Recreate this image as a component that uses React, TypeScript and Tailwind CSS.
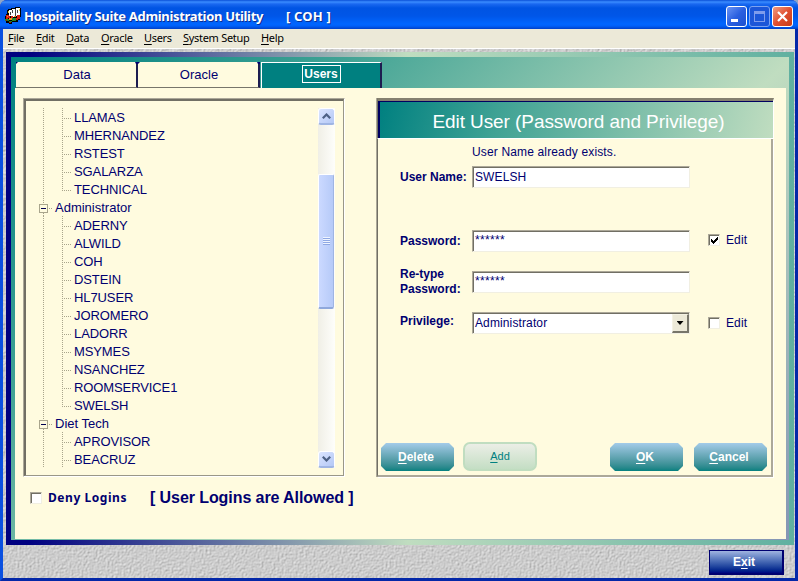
import React from "react";

const sans = "font-['Liberation_Sans',Arial,sans-serif]";
const ui = "font-['Noto_Sans','Open_Sans',sans-serif]";

const menus: [string, string][] = [
  ["File", "w-[28px]"],
  ["Edit", "w-[30px]"],
  ["Data", "w-[35px]"],
  ["Oracle", "w-[43px]"],
  ["Users", "w-[39px]"],
  ["System Setup", "w-[78px]"],
  ["Help", "w-[30px]"],
];

const tree: { name: string; group?: boolean; last?: boolean }[] = [
  { name: "LLAMAS" },
  { name: "MHERNANDEZ" },
  { name: "RSTEST" },
  { name: "SGALARZA" },
  { name: "TECHNICAL", last: true },
  { name: "Administrator", group: true },
  { name: "ADERNY" },
  { name: "ALWILD" },
  { name: "COH" },
  { name: "DSTEIN" },
  { name: "HL7USER" },
  { name: "JOROMERO" },
  { name: "LADORR" },
  { name: "MSYMES" },
  { name: "NSANCHEZ" },
  { name: "ROOMSERVICE1" },
  { name: "SWELSH", last: true },
  { name: "Diet Tech", group: true },
  { name: "APROVISOR" },
  { name: "BEACRUZ" },
];

function VLine({ h = "h-full" }: { h?: string }) {
  return (
    <div
      className={`w-px shrink-0 ${h} bg-[repeating-linear-gradient(to_bottom,#a9a58c_0_1px,transparent_1px_2px)]`}
    />
  );
}

function HLine({ w }: { w: string }) {
  return (
    <div
      className={`h-px shrink-0 ${w} bg-[repeating-linear-gradient(to_right,transparent_0_1px,#a9a58c_1px_2px)]`}
    />
  );
}

function TreeRow({ name, group, last }: { name: string; group?: boolean; last?: boolean }) {
  if (group) {
    return (
      <div className="flex h-[18px] pl-[13px]">
        <div className="flex w-[9px] flex-col items-center">
          <VLine h="h-[6px]" />
          <div className="flex size-[9px] shrink-0 items-center justify-center border border-[#a9a58c]">
            <div className="h-px w-[5px] bg-[#000050]" />
          </div>
          <VLine h="h-[3px]" />
        </div>
        <div className="pt-[10px]">
          <HLine w="w-[4px]" />
        </div>
        <span className="ml-[3px] leading-[20px]">{name}</span>
      </div>
    );
  }
  return (
    <div className="flex h-[18px] pl-[17px]">
      <VLine />
      <div className="w-[18px]" />
      <VLine h={last ? "h-[11px]" : "h-full"} />
      <div className="pt-[10px]">
        <HLine w="w-[8px]" />
      </div>
      <span className="ml-[3px] leading-[20px] tracking-[-0.1px]">{name}</span>
    </div>
  );
}

function Hot({ text, at = 0 }: { text: string; at?: number }) {
  return (
    <>
      {text.slice(0, at)}
      <span className="underline decoration-1 underline-offset-2">{text[at]}</span>
      {text.slice(at + 1)}
    </>
  );
}

function ScrollButton({ down }: { down?: boolean }) {
  return (
    <div className="flex h-[17px] w-[17px] items-center justify-center rounded-[3px] border border-b-2 border-white border-b-[#9fb5e4] bg-gradient-to-br from-[#dbe5ff] to-[#b4c8f6]">
      <svg width="9" height="6" viewBox="0 0 9 6">
        <path
          d={down ? "M.8 .8 4.5 4.5 8.2 .8" : "M.8 5.2 4.5 1.5 8.2 5.2"}
          fill="none"
          stroke="#4d6185"
          strokeWidth="2.2"
        />
      </svg>
    </div>
  );
}

const sunken =
  "border border-t-[#aca899] border-l-[#aca899] border-r-[#f1efe2] border-b-[#f1efe2] bg-white shadow-[inset_1px_1px_0_#716f64]";

function CheckBox({ checked }: { checked?: boolean }) {
  return (
    <div className={`size-[12px] shrink-0 pt-px pl-px ${sunken}`}>
      {checked && (
        <svg width="9" height="9" viewBox="0 0 9 9" shapeRendering="crispEdges">
          <path d="M1 3h1v1h1v1h1v-1h1v-1h1v-1h1v-1h1v3h-1v1h-1v1h-1v1h-1v1h-1v-1h-1v-1h-1z" fill="#000" />
        </svg>
      )}
    </div>
  );
}

function Field({ children, leading = "leading-[19px]" }: { children?: React.ReactNode; leading?: string }) {
  return (
    <div className={`flex h-[22px] w-[218px] pt-px pl-[2px] text-[12px] tracking-[0.12px] ${leading} ${sunken}`}>
      {children}
    </div>
  );
}

function GradientButton({ text, className = "" }: { text: string; className?: string }) {
  return (
    <button
      className={`h-[28px] w-[73px] bg-gradient-to-b from-[#a3cbe9] to-[#008080] pr-[3px] pb-px text-[12px] font-bold text-white [clip-path:polygon(5px_0,68px_0,73px_5px,73px_23px,68px_28px,5px_28px,0_23px,0_5px)] ${className}`}
    >
      <Hot text={text} />
    </button>
  );
}

function AppIcon() {
  return (
    <svg width="18" height="18" viewBox="0 0 18 18" shapeRendering="crispEdges">
      <path d="M4 2h3V1h4V0h5v1h1v9h-1v3h-2v2H8v2H5v-1H2v-2H1V9h1V7h1V3h1z" fill="#000" />
      <path d="M5 3h3v6H5zM8 2h3v8H8zM12 1h4v8h-4z" fill="#fff" />
      <path d="M8 3h1v3H8zM11 2h1v7h-1zM13 3h1v3h-1zM6 5h1v3H6z" fill="#444" />
      <path d="M4 4h1v2H4zM15 2h1v2h-1z" fill="#e8d040" />
      <path d="M2 8h3v1h1v2H4v2H2zM7 9h2v2H7zM13 8h3v4h-2v1h-2v-2h1z" fill="#d82010" />
      <path d="M1 12h4v2H1zM8 11h4v3H8zM5 14h3v1H5z" fill="#208828" />
      <path d="M5 11h3v2H5zM10 9h2v1h-2zM3 9h1v1H3z" fill="#f09018" />
      <path d="M5 15h2v1H5zM2 13h1v1H2zM12 12h1v1h-1z" fill="#b01008" />
    </svg>
  );
}

function Tab({ label, width }: { label: string; width: string }) {
  return (
    <div className={`h-[26px] ${width} bg-[#000070]`}>
      <div className="h-full border-r-2 border-b border-r-[#1d1d50] border-b-[#77756a] bg-[#fffbdf] pl-[2px] text-center text-[13px] leading-[25px] text-[#000070] [clip-path:polygon(2px_0,calc(100%-3px)_0,calc(100%-2px)_2px,100%_2px,100%_100%,0_100%,0_2px)]">
        {label}
      </div>
    </div>
  );
}

export default function App() {
  return (
    <div className={`h-[581px] w-[798px] overflow-hidden bg-[#8fa5c8] ${sans} text-[#000070]`}>
      <div className="flex h-full flex-col overflow-hidden rounded-t-[7px] bg-[#0831c8]">
        {/* Title bar */}
        <div
          className={`flex h-[29px] shrink-0 items-center bg-[linear-gradient(to_bottom,#0a50d8_0,#3a8cff_2px,#1a68f0_4px,#0054e3_8px,#0056e8_16px,#0066ff_24px,#0060f8_26px,#0040c8_29px)] pt-[3px] pl-[4px] text-white ${ui}`}
        >
          <AppIcon />
          <div className="ml-[2px] text-[13px] leading-[20px] font-bold [text-shadow:1px_1px_0_#0b2f92]">
            <span className="inline-block w-[262px] tracking-[-0.32px] whitespace-nowrap">
              Hospitality Suite Administration Utility
            </span>
            <span className="tracking-[0.2px]">[ COH ]</span>
          </div>
          <div className="mr-[5px] ml-auto flex gap-[2px]">
            <div className="flex size-[21px] rounded-[3px] border border-white bg-gradient-to-br from-[#6a93f4] via-[#2a5fe0] to-[#1c50d0] pt-[12px] pl-[4px]">
              <div className="h-[3px] w-[7px] bg-white" />
            </div>
            <div className="flex size-[21px] items-center justify-center rounded-[3px] border border-[#7da2f0] bg-[#1c56d8]">
              <div className="size-[11px] border border-t-[3px] border-[#7f9cec]" />
            </div>
            <div className="flex size-[21px] items-center justify-center rounded-[3px] border border-white bg-gradient-to-br from-[#f09a80] via-[#e05030] to-[#c83c18]">
              <svg width="11" height="11" viewBox="0 0 11 11">
                <path d="M1 1 10 10M10 1 1 10" stroke="#fff" strokeWidth="2.2" />
              </svg>
            </div>
          </div>
        </div>

        <div className="flex grow flex-col border-r-[3px] border-b-[3px] border-l-[3px] border-r-[#0428a8] border-b-[#0428a8] border-l-[#0a50e0]">
          {/* Menu bar */}
          <div
            className={`flex h-[20px] shrink-0 border-b border-white bg-[#ece9d8] pl-[5px] text-[11px] leading-[18px] tracking-[-0.3px] text-black ${ui}`}
          >
            {menus.map(([name, w]) => (
              <div key={name} className={`${w} shrink-0 whitespace-nowrap`}>
                <Hot text={name} />
              </div>
            ))}
          </div>

          <div className="relative isolate grow bg-[#cbcbcb] pt-[3px] pl-[3px]">
            {/* Stone texture */}
            <svg className="absolute inset-0 -z-10" width="792" height="529">
              <filter id="stone" x="0" y="0" width="100%" height="100%" colorInterpolationFilters="sRGB">
                <feTurbulence type="fractalNoise" baseFrequency="0.5" numOctaves="2" seed="4" />
                <feDiffuseLighting lightingColor="#d6d6d6" surfaceScale="0.5" diffuseConstant="1.15">
                  <feDistantLight azimuth="225" elevation="56" />
                </feDiffuseLighting>
              </filter>
              <rect width="792" height="529" filter="url(#stone)" />
            </svg>

            {/* Main frame */}
            <div className="h-[493px] w-[788px] bg-[linear-gradient(to_right,#000080_0%,#000080_3%,#c0ddc0_51%,#60b0a0_100%)] pt-[5px] pl-[5px]">
              <div className="h-[483px] w-[778px] bg-[linear-gradient(135deg,#008080_0%,#3fa294_26%,#c0ddc0_62%,#8495b5_100%)] pt-[5px] pl-[4px]">
                <div className="flex h-[26px] pl-px">
                  <Tab label="Data" width="w-[122px]" />
                  <Tab label="Oracle" width="w-[122px]" />
                  <div className="ml-px flex h-[26px] w-[121px] items-start justify-center border-t border-r-2 border-l border-t-white border-r-[#1d1d50] border-l-white bg-[#008080] pt-[2px]">
                    <div className="h-[18px] w-[39px] border border-white text-center text-[12px] leading-[17px] font-bold text-white">
                      Users
                    </div>
                  </div>
                </div>

                <div className="h-[451px] w-[771px] bg-[#fffbdf] pt-[10px] pl-[8px]">
                  <div className="flex h-[381px]">
                    {/* User tree */}
                    <div className="h-[379px] w-[322px] border border-t-[#aca899] border-r-white border-b-white border-l-[#aca899]">
                      <div className="flex h-full border-t-2 border-r border-b border-l-2 border-t-[#716f64] border-r-[#9a9788] border-b-[#9a9788] border-l-[#716f64] pt-[7px]">
                        <div className="h-[360px] w-[292px] overflow-hidden text-[13px]">
                          {tree.map((row) => (
                            <TreeRow key={row.name} {...row} />
                          ))}
                        </div>
                        <div className="flex h-[360px] w-[17px] flex-col bg-gradient-to-r from-[#f0efe6] to-[#fefefb]">
                          <ScrollButton />
                          <div className="mt-[49px] flex h-[135px] w-[16px] items-center justify-center rounded-[2px] border border-b-2 border-white border-r-[#9fb5e4] border-b-[#8fa8dc] bg-gradient-to-r from-[#cbd9ff] to-[#b6caf8]">
                            <div className="h-[8px] w-[7px] bg-[repeating-linear-gradient(to_bottom,#eef4ff_0_1px,#8fa8e4_1px_2px)]" />
                          </div>
                          <div className="mt-auto">
                            <ScrollButton down />
                          </div>
                        </div>
                      </div>
                    </div>

                    {/* Edit user panel */}
                    <div className="ml-[31px] flex h-[379px] w-[398px] flex-col border-l border-l-[#aca899]">
                      <div className="flex h-[41px] shrink-0 flex-col border-t-[3px] border-r border-b border-l border-t-[#85806f] border-r-white border-b-white border-l-[#716f64]">
                        <div className="h-[37px] border-t border-l-2 border-[#000060] bg-[linear-gradient(105deg,#008080_0%,#3fa294_30%,#c0ddc0_100%)] pl-[4px] text-center text-[19px] leading-[40px] tracking-[-0.07px] text-white">
                          Edit User (Password and Privilege)
                        </div>
                      </div>
                      <div className="mr-px flex h-[338px] flex-col border-r-2 border-b-2 border-l border-[#aca899] border-l-[#716f64] shadow-[1px_1px_0_#fff]">
                        <div className="h-[27px] pt-[4px] pl-[94px] text-[12px] leading-[18px] tracking-[0.15px]">
                          User Name already exists.
                        </div>
                        <div className="flex h-[64px] pl-[22px]">
                          <div className="w-[72px] text-[12px] leading-[22px] font-bold">User Name:</div>
                          <Field>SWELSH</Field>
                        </div>
                        <div className="flex h-[41px] pl-[22px]">
                          <div className="w-[72px] text-[12px] leading-[22px] font-bold">Password:</div>
                          <Field leading="leading-[17px]">
                            <span className="tracking-[0.33px]">******</span>
                          </Field>
                          <div className="ml-[18px] flex h-[20px] items-center gap-[6px] text-[12px] tracking-[0.1px]">
                            <CheckBox checked />
                            Edit
                          </div>
                        </div>
                        <div className="flex h-[41px] pl-[22px]">
                          <div className="-mt-[4px] w-[72px] text-[12px] leading-[15px] font-bold">
                            Re-type
                            <br />
                            Password:
                          </div>
                          <Field leading="leading-[17px]">
                            <span className="tracking-[0.33px]">******</span>
                          </Field>
                        </div>
                        <div className="flex h-[130px] pl-[22px]">
                          <div className="w-[72px] text-[12px] leading-[18px] font-bold">Privilege:</div>
                          <Field>
                            Administrator
                            <div className="ml-auto flex h-[19px] w-[17px] items-center justify-center border border-r-2 border-b-2 border-[#f4f2e4] border-r-[#77756a] border-b-[#77756a] bg-[#ece9d8]">
                              <div className="h-[4px] w-[7px] bg-black [clip-path:polygon(0_0,100%_0,50%_100%)]" />
                            </div>
                          </Field>
                          <div className="ml-[18px] flex h-[22px] items-center gap-[6px] text-[12px] tracking-[0.1px]">
                            <CheckBox />
                            Edit
                          </div>
                        </div>
                        <div className="flex h-[30px] pl-[3px]">
                          <GradientButton text="Delete" className="mt-px" />
                          <button className="ml-[9px] h-[29px] w-[74px] rounded-[7px] border-2 border-[#c0ddc0] bg-gradient-to-b from-[#ebeee6] to-[#c4dec4] text-[11px] text-[#008080]">
                            <Hot text="Add" />
                          </button>
                          <GradientButton text="OK" className="mt-px ml-[73px]" />
                          <GradientButton text="Cancel" className="mt-px ml-[11px]" />
                        </div>
                      </div>
                    </div>
                  </div>

                  <div className="mt-[9px] flex h-[20px] items-center pl-[7px] font-bold">
                    <CheckBox />
                    <div className={`ml-[6px] w-[102px] text-[12px] tracking-[0.55px] ${ui}`}>Deny Logins</div>
                    <div className="text-[16px] font-bold tracking-[-0.08px]">[ User Logins are Allowed ]</div>
                  </div>
                </div>
              </div>
            </div>

            <div className="mt-[5px] flex justify-end pr-[11px]">
              <button className="h-[25px] w-[75px] border border-r-2 border-b-2 border-[#000070] bg-gradient-to-b from-[#a0b4e0] to-[#000080] pr-[4px] text-[12px] font-bold text-white">
                <Hot text="Exit" at={1} />
              </button>
            </div>
          </div>
        </div>
      </div>
    </div>
  );
}
